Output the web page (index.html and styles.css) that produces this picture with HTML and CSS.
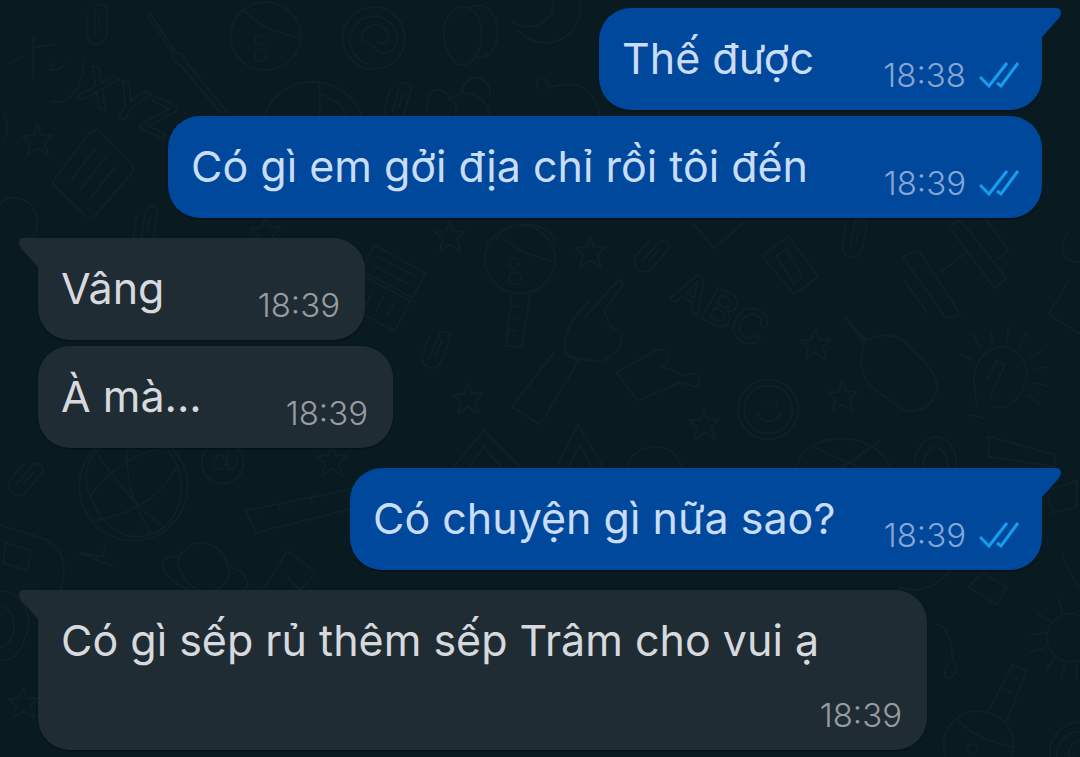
FILE: index.html
```
<!DOCTYPE html>
<html lang="vi">
<head>
    <meta charset="UTF-8">
    <meta name="viewport" content="width=device-width, initial-scale=1.0">
    <title>Chat</title>
    <link rel="stylesheet" href="styles.css">
</head>
<body>

    <!-- Wallpaper doodles -->
    <svg class="wallpaper" viewBox="0 0 1080 757" preserveAspectRatio="xMidYMin slice" aria-hidden="true">
        <defs>
            <path id="star" d="M0-15 4-5 15-5 7 3 11 15 0 8-10 15-7 3-15-4-4-5Z"/>
            <path id="clip" d="M-6 14V-12a6 6 0 0 1 12 0V12a10 10 0 0 1-20 0V-8M-1 8V-8"/>
            <g id="racket">
                <ellipse rx="35" ry="34"/>
                <circle cx="-6" cy="4" r="5"/>
                <circle cx="-5" cy="19" r="6"/>
                <path d="M-22-26C-5-8 14-3 34 2"/>
            </g>
            <path id="handle" d="M-8 34l-6 52 16 2 8-54M-9 46l8 2M-10 58l8 2M-12 70l8 2"/>
            <g id="spiral">
                <circle r="31"/>
                <path d="M-3 26A24 24 0 1 1 24 1c0 12-15 20-22 10-8-12-14-2-14-12a14 14 0 0 1 26-5c4 12-6 14-10 9"/>
            </g>
            <g id="shoe">
                <path d="M-15-25C-30-12-24 20-10 28 6 34 18 8 12-14 8-28-5-34-15-25Z"/>
                <path d="M0-28C22-40 36-10 27 10 20 24 8 23 4 18"/>
            </g>
            <g id="book">
                <path d="M-17-36 37-14q6 3 4 9L18 34q-3 6-9 3l-50-24q-6-3-3-9l19-35q3-7 8-5Z"/>
                <path d="M-14-20l38 16M-20-8l38 16M-26 4l38 16"/>
            </g>
            <g id="planet">
                <path d="M-26-6C-18-34 20-34 26 4 18 32-16 30-26-6Z"/>
                <path d="M-24-12c-16-2-22 6-14 16 18 22 58 30 78 18 10-8-2-22-14-24"/>
            </g>
        </defs>
        <use href="#clip" x="101" y="22"/>
        <use href="#racket" transform="translate(266 36)"/>
        <use href="#spiral" transform="translate(374 38)"/>
        <use href="#shoe" transform="translate(468 36)"/>
        <path d="M512 22c18 12 42 0 42-22M518 30c26 28 68 6 62-30"/>
        <path d="M34 36v42M34 48l22-4M24 56l-14 8M56 62c-14 12 6 10 10 0M84 58c2 30-20 52-32 42"/>
        <path d="M150 12l26 40q10 2 12 12l40 48h-8L182 66q-10-4-8-12L148 16Z"/>
        <text x="76" y="96" transform="rotate(26 76 96)">XYZ</text>
        <use href="#star" x="38" y="140"/>
        <g transform="translate(94 172) rotate(-75)"><use href="#book"/></g>
        <path d="M0 204c14-14 38-4 38 18 0 14-8 18-18 16M4 112q8 16 0 30"/>
        <path d="M266 116c4-20 24-34 46-34 26 0 44 16 50 34M320 84v32M320 94q20 6 28 22"/>
        <use href="#clip" transform="translate(402 100) rotate(16)"/>
        <path d="M428 114c-6-30 18-30 22-14 14-14 36-6 40 16M462 92c4-22 30-16 28 4M456 100v16"/>
        <path d="M540 90c-10-14 8-18 8-2 18-6 44-10 52 28"/>
        <use href="#clip" transform="translate(150 224) rotate(10)"/>
        <use href="#star" x="266" y="232"/>
        <path d="M496 240c8-20 48-22 60 0"/>

        <g transform="translate(388 284) rotate(28)"><path d="M-30-28H28V0H-30ZM-22-20H20M-22-10H20M-30 4H28V38H-30ZM-22 12v18M-10 12v18M2 12v18M14 12v18"/></g>
        <g transform="translate(520 259)"><use href="#racket"/><use href="#handle"/></g>
        <use href="#star" x="590" y="252"/>
        <use href="#clip" transform="translate(655 255) rotate(42)"/>
        <path d="M692 222l22 26 30-26"/>
        <path d="M762 256l26-20 30 40-24 18ZM776 256l10-8 16 28-8 8Z"/>
        <use href="#clip" transform="translate(858 236) rotate(10)"/>
        <path d="M948 226l12-6 46 58-12 10ZM968 218l14-4 26 36-12 10M918 250l42 64-14 4-44-62ZM904 280l24 34M940 272l26-20"/>
        <use href="#star" x="450" y="236"/>
        <path d="M584 318l34-38q6-2 4 6l-18 24 6 16 12 6-2 16-18 14-34-6c-8-14 0-30 12-46l10-10M554 352l-42 54 28 18 40-66M562 350l18 12"/>
        <use href="#clip" transform="translate(440 348) rotate(22)"/>
        <text x="668" y="298" transform="rotate(30 668 298)">ABC</text>
        <use href="#star" x="815" y="344"/>
        <path d="M616 372l40-22c12-4 18 12 4 16 16 2 20 12 28 8 10-4 16 10 6 12l-14-4-42 18Z"/>
        <path d="M844 316l22 24c20-10 38-4 46 10 16 14 28 30 24 42-8 20-28 22-38 14l-28-20c-12-16-10-30-6-44Z"/>
        <path d="M976 404c-2-20-6-34 4-46 18-22 44-10 46 14 0 20-18 40-32 34M986 380l10-20 8 4-14 32M968 414l16 4"/>
        <path d="M980 348l-8-16M992 344l-2-14M1006 342l2-16M1018 348l8-16M1028 358l14-8M1032 370l16-4M1032 382l16 4M1026 394l14 10M972 360l-12-6"/>
        <use href="#star" x="468" y="398"/>
        <use href="#star" x="704" y="424"/>
        <use href="#star" x="842" y="396"/>
        <circle cx="768" cy="409" r="30"/>
        <circle cx="768" cy="409" r="24"/>
        <path d="M762 400v4M776 402v4M756 412q12 18 26 0"/>
        <path d="M452 468l32-38 38 38M468 468l16-22 18 22M556 468l22-44 26 44M568 468l12-24 12 24M626 468c6-28 50-30 56 0"/>
        <path d="M796 468c4-36 78-44 94 0M812 446l50 22M880 440l-40 28"/>
        <path d="M914 468c0-42 44-42 42 0M922 468c2-28 24-28 26 0M988 436l66 18v12l-66-10Z"/>

        <use href="#clip" transform="translate(30 478) rotate(40)"/>
        <circle cx="134" cy="486" r="54"/>
        <path d="M86 480c0-30 26-44 50-44 58 0 64 98 0 100-28-2-44-30-50-56ZM90 496q38-48 86-50M94 520q62-10 84-56M98 454q42 58 64 70M130 434q-10 50 22 100M106 542l-2 14-24-4 34 14"/>
        <circle cx="223" cy="462" r="21"/>
        <path d="M214 462q6-14 14-2c-6 14-16 8-14 2Zm14-12v18q8 4 10-10"/>
        <path d="M246 510l106-22v20l-96 24ZM264 508v6M280 504v6M296 500v6M312 496v6M328 492v6"/>
        <use href="#planet" transform="translate(204 568)"/>
        <path d="M0 524l44 14c26 12 22 36 16 54M6 542l26 8-4 20-24-8ZM264 588l24-38 28 22-16 18-14-16"/>
        <use href="#star" x="24" y="702"/>
        <path d="M0 590c22 0 36 24 26 46-4 18-16 24-26 24M0 604c20 6 20 40 0 42"/>
        <use href="#star" x="332" y="460"/>
        <path d="M1046 490l30-10v26l-24 6ZM968 586l14-14 24 14-10 18ZM898 586c20 8 38 0 54-18M934 624q14-4 18 32l4 14c-10 16-16 2-8-8"/>
        <circle cx="1070" cy="637" r="24"/>
        <path d="M1050 620l-14-8M1046 632l-18 2M1046 646l-18 6M1054 656l-8 14M1064 662l-4 18M1062 614l-4-16M1076 662v18"/>
        <g transform="translate(978 744)"><use href="#racket"/></g>
        <path d="M988 710l24-46 14 6-20 50M1004 688l8 4M1010 676l8 4"/>
        <use href="#spiral" transform="translate(1080 752)"/>
        <path d="M1062 556l16 32M1068 232c-14 18-4 30 12 30M1068 280l-20 34 32 20"/>
    </svg>

    <!-- Conversation -->
    <main class="chat">
        <div class="message sent tail short">
            <p>Thế được</p>
            <div class="meta">
                <time>18:38</time>
                <svg class="ticks" viewBox="0 0 40 28" role="img" aria-label="Đã xem"><path d="M1 16 10 25 28 2M18 22 22 25 39 2"/></svg>
            </div>
        </div>
        <div class="message sent long">
            <p>Có gì em gởi địa chỉ rồi tôi đến</p>
            <div class="meta">
                <time>18:39</time>
                <svg class="ticks" viewBox="0 0 40 28" role="img" aria-label="Đã xem"><path d="M1 16 10 25 28 2M18 22 22 25 39 2"/></svg>
            </div>
        </div>

        <div class="message received tail tiny first">
            <p>Vâng</p>
            <div class="meta"><time>18:39</time></div>
        </div>
        <div class="message received small">
            <p>À mà...</p>
            <div class="meta"><time>18:39</time></div>
        </div>

        <div class="message sent tail medium first">
            <p>Có chuyện gì nữa sao?</p>
            <div class="meta">
                <time>18:39</time>
                <svg class="ticks" viewBox="0 0 40 28" role="img" aria-label="Đã xem"><path d="M1 16 10 25 28 2M18 22 22 25 39 2"/></svg>
            </div>
        </div>

        <div class="message received tail wide stacked first">
            <p>Có gì sếp rủ thêm sếp Trâm cho vui ạ</p>
            <div class="meta"><time>18:39</time></div>
        </div>
    </main>

</body>
</html>
```
FILE: styles.css
```
* {
    margin: 0;
    padding: 0;
    box-sizing: border-box;
}
body {
    position: relative;
    min-height: 100vh;
    background-color: #091a21;
    font-family: Inter, "Noto Sans", sans-serif;
    overflow: hidden;
}

/* Wallpaper */
.wallpaper {
    position: absolute;
    top: 0;
    left: 0;
    width: 100%;
    height: 100%;
    fill: none;
    stroke: #0e2127;
    stroke-width: 2;
    stroke-linejoin: round;
}
.wallpaper text {
    font-size: 48px;
    font-weight: 600;
}

/* Conversation */
.chat {
    position: relative;
    display: flex;
    flex-direction: column;
    gap: 6px;
    padding: 8px 38px;
}

/* Message bubbles */
.message {
    position: relative;
    display: flex;
    justify-content: space-between;
    max-width: 100%;
    min-height: 102px;
    padding: 0 23px;
    border-radius: 32px;
    box-shadow: 0 1px 2px rgba(0, 0, 0, 0.4);
}
.message.first {
    margin-top: 14px;
}
.message p {
    padding-top: 20px;
    font-size: 43px;
    font-weight: 400;
    line-height: 60px;
    white-space: nowrap;
}
.sent {
    align-self: flex-end;
    background-color: #00489b;
    color: #c9dcf8;
}
.received {
    align-self: flex-start;
    padding-right: 25px;
    background-color: #202c33;
    color: #d6dade;
}
.stacked {
    flex-direction: column;
    min-height: 160px;
}

/* Bubble widths */
.tiny { width: 327px; }
.small { width: 355px; }
.short { width: 443px; }
.medium { width: 692px; }
.long { width: 874px; }
.wide { width: 889px; }

/* Tails */
.sent.tail {
    border-top-right-radius: 0;
}
.received.tail {
    border-top-left-radius: 0;
}
.tail::before {
    content: "";
    position: absolute;
    top: 0;
    width: 20px;
    height: 30px;
    background-color: inherit;
}
.sent.tail::before {
    left: 100%;
    clip-path: path("M0 0H14Q19 0 19 5Q19 7 17 10L0 29Z");
}
.received.tail::before {
    right: 100%;
    clip-path: path("M20 0H6Q1 0 1 5Q1 7 3 10L20 29Z");
}

/* Time and read ticks */
.meta {
    display: flex;
    align-items: center;
    align-self: flex-end;
    gap: 13px;
    padding-bottom: 14px;
}
.meta time {
    font-size: 33px;
    font-weight: 300;
    line-height: 42px;
}
.sent time {
    color: #86a5d3;
}
.received time {
    color: #979da2;
}
.ticks {
    width: 40px;
    height: 28px;
    fill: none;
    stroke: #169ff0;
    stroke-width: 3;
}
```
